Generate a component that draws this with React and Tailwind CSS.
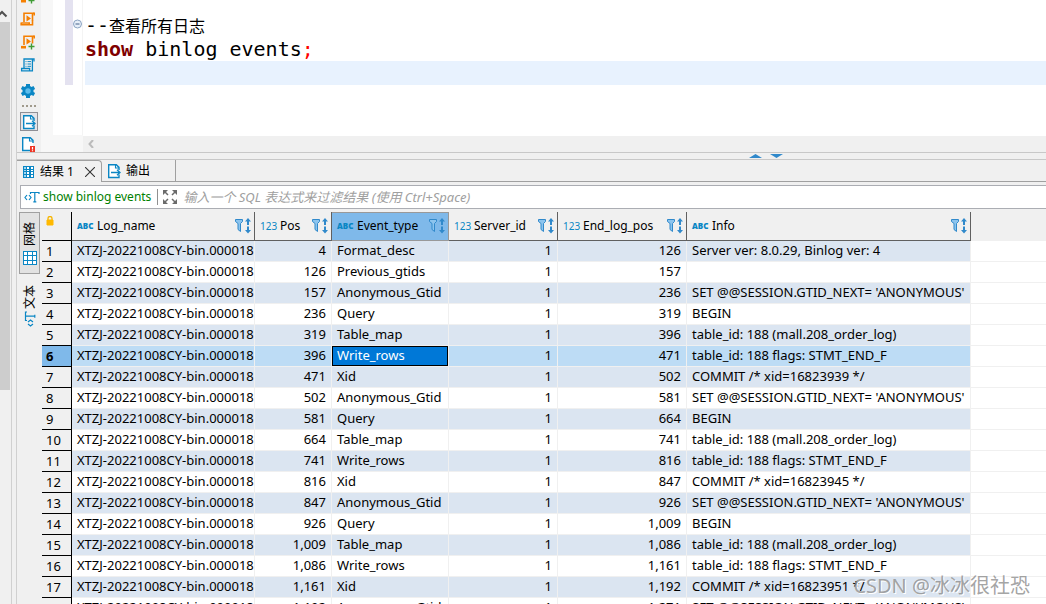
import React from 'react';

const LOG_NAME = 'XTZJ-20221008CY-bin.000018';

const columns = [
  { name: 'Log_name', type: 'ABC' },
  { name: 'Pos', type: '123' },
  { name: 'Event_type', type: 'ABC', active: true },
  { name: 'Server_id', type: '123' },
  { name: 'End_log_pos', type: '123' },
  { name: 'Info', type: 'ABC' },
];

const SET_GTID = "SET @@SESSION.GTID_NEXT= 'ANONYMOUS'";
const MAP_INFO = 'table_id: 188 (mall.208_order_log)';
const WRITE_INFO = 'table_id: 188 flags: STMT_END_F';

const rows = [
  ['4', 'Format_desc', '126', 'Server ver: 8.0.29, Binlog ver: 4'],
  ['126', 'Previous_gtids', '157', ''],
  ['157', 'Anonymous_Gtid', '236', SET_GTID],
  ['236', 'Query', '319', 'BEGIN'],
  ['319', 'Table_map', '396', MAP_INFO],
  ['396', 'Write_rows', '471', WRITE_INFO],
  ['471', 'Xid', '502', 'COMMIT /* xid=16823939 */'],
  ['502', 'Anonymous_Gtid', '581', SET_GTID],
  ['581', 'Query', '664', 'BEGIN'],
  ['664', 'Table_map', '741', MAP_INFO],
  ['741', 'Write_rows', '816', WRITE_INFO],
  ['816', 'Xid', '847', 'COMMIT /* xid=16823945 */'],
  ['847', 'Anonymous_Gtid', '926', SET_GTID],
  ['926', 'Query', '1,009', 'BEGIN'],
  ['1,009', 'Table_map', '1,086', MAP_INFO],
  ['1,086', 'Write_rows', '1,161', WRITE_INFO],
  ['1,161', 'Xid', '1,192', 'COMMIT /* xid=16823951 */'],
  ['1,192', 'Anonymous_Gtid', '1,271', SET_GTID],
];

const SELECTED = 5;

const ScriptIcon = ({ plus }) => (
  <svg width="16" height="16" viewBox="0 0 16 16" fill="none" stroke="#f57f00" strokeWidth="1.6">
    <path d="M4 11V2.2h10.2M12.5 2.2v7.3" />
    {plus ? <path d="M1 13.2h5" strokeWidth="2.6" /> : <path d="M1.2 12h8v1.8h3.3V9M1.2 11.4v2.4h8" />}
    <path d="M14.2 1.4v3" />
    <path d="M6.5 4.2v6.4L11 7.4z" fill="#f57f00" stroke="none" />
    {plus && <path d="M11.5 9.5v6M8.5 12.5h6" stroke="#3f9c35" strokeWidth="1.4" />}
  </svg>
);

const PlanIcon = () => (
  <svg width="16" height="16" viewBox="0 0 16 16" fill="none" stroke="#0a86c4" strokeWidth="1.3">
    <path d="M4 11V2h10v2.4M12.4 2v11.8H1.6V11.5h8v2.3" />
    <path d="M5.5 4.6h1M7.5 4.6H11M5.5 7h1M7.5 7H11M5.5 9.3h1M7.5 9.3H11" strokeWidth="1" />
  </svg>
);

const GearIcon = () => (
  <svg width="16" height="16" viewBox="0 0 16 16">
    <path
      fill="#0a86c4"
      d="M6 1h4v2l1.500.900 2-1 1.600 3L13.500 7v2l1.600 1.100-1.600 3-2-1L10 13v2H6v-2l-1.500-.900-2 1-1.600-3L2.500 9V7L.9 5.900l1.600-3 2 1L6 3z"
    />
    <circle cx="8" cy="8" r="2.700" fill="#5dbcec" />
  </svg>
);

const DocIcon = ({ error }) => (
  <svg width="16" height="16" viewBox="0 0 16 16" fill="none" stroke="#0a86c4" strokeWidth="1.400">
    <path d="M13 11.500v3H2.700V1.700h7.600L13 4.400V7" fill="#fff" />
    <path d="M9.500 1.500v3.500h3.500" strokeWidth="1.100" />
    {error ? (
      <>
        <path d="M10 10h5v6h-5z" fill="#ee3524" stroke="none" />
        <path d="M12.500 11v2.500M12.500 14.300v1" stroke="#fff" strokeWidth="1.200" />
      </>
    ) : (
      <path d="M5 9.500h8.500M11 6.800l3 2.700-3 2.700" strokeWidth="1.300" />
    )}
  </svg>
);

const GridIcon = () => (
  <svg width="14" height="14" viewBox="0 0 14 14" fill="#fff" stroke="#0a86c4" shapeRendering="crispEdges">
    <path d="M.5.5h13v13H.5z" />
    <path d="M.5 4.500h13M.5 9.500h13M4.500.5v13M9.500.5v13" />
  </svg>
);

const TableIcon = () => (
  <svg width="12" height="14" viewBox="0 0 12 14" shapeRendering="crispEdges">
    <path d="M0 1h11v12H0z" fill="#0a86c4" />
    <path d="M4 2h2v2H4zM8 2h2v2H8zM4 5h2v1H4zM8 5h2v1H8zM4 7h2v2H4zM8 7h2v2H8zM4 10h2v2H4zM8 10h2v2H8z" fill="#fff" />
    <path d="M1 2h2v2H1zM1 5h2v1H1zM1 7h2v2H1zM1 10h2v2H1z" fill="#9fd6f2" />
  </svg>
);

const SqlTextIcon = () => (
  <svg width="16" height="12" viewBox="0 0 16 12" fill="none" stroke="#0a86c4" strokeWidth="1.200">
    <path d="M3 4L1 6.500 3 9M5 4l2 2.500L5 9" />
    <path d="M6.500 3V1.500h8.500V3M10.800 1.500v9.300M9.300 10.800h3" />
  </svg>
);

const ExpandIcon = () => (
  <svg width="16" height="16" viewBox="0 0 16 16" fill="#6b6b6b" stroke="#6b6b6b" strokeWidth="1.500">
    <path d="M2 2l4 4M14 2l-4 4M2 14l4-4M14 14l-4-4" fill="none" />
    <path d="M1 1h5L1 6zM15 1h-5l5 5zM1 15h5l-5-5zM15 15h-5l5-5z" stroke="none" />
  </svg>
);

const FilterSortIcon = () => (
  <svg width="17" height="16" viewBox="0 0 17 16">
    <path d="M.5 1.500h7v2L5.500 5.500v8L3 11.500v-6L.5 3.500z" fill="#8cc4ee" stroke="#3089cb" />
    <path d="M13 0l3 3.500h-2V7h-2V3.500h-2zM13 15.500l3-3.500h-2V8.500h-2V12h-2z" fill="#3089cb" />
  </svg>
);

const LockIcon = () => (
  <svg width="8" height="10" viewBox="0 0 8 10">
    <path d="M2 5V2.500a2 2 0 0 1 4 0V5" fill="none" stroke="#f5b400" strokeWidth="1.300" />
    <path d="M1 4h6v5H1z" fill="#ffb900" stroke="#ffb900" />
  </svg>
);

const OuterScrollbar = () => (
  <div className="flex w-[17px] shrink-0 bg-[#f0f0f0]">
    <div className="flex w-[10px] flex-col">
      <svg width="8" height="22" viewBox="0 0 8 22" fill="none" stroke="#505050" strokeWidth="2">
        <path d="M-2.500 16.500L2 12l4.500 4.500" />
      </svg>
      <div className="h-[61%] bg-[#cdcdcd]" />
    </div>
    <div className="ml-px w-[6px] border-x border-[#d0d0d0]" />
  </div>
);

const Toolbar = () => (
  <div className="flex w-6 shrink-0 flex-col bg-[#f0f0f0] pl-[3px]">
    <button aria-label="New script" className="-mt-3 size-4"><ScriptIcon plus /></button>
    <button aria-label="Execute script" className="mt-[7px] size-4"><ScriptIcon /></button>
    <button aria-label="Execute in new tab" className="mt-[7px] size-4"><ScriptIcon plus /></button>
    <button aria-label="Explain plan" className="mt-[7px] size-4"><PlanIcon /></button>
    <button aria-label="Settings" className="mt-2.5 size-4"><GearIcon /></button>
    <div className="mt-1.5 ml-0.5 flex gap-0.5">
      {[0, 1, 2, 3].map((i) => (
        <span key={i} className="size-0.5 bg-[#a09a8c]" />
      ))}
    </div>
    <button aria-label="Show output" className="mt-[5px] flex h-5 w-[18px] items-center justify-center border border-[#8f8f95] bg-[#e4e4e8]">
      <DocIcon />
    </button>
    <button aria-label="Show log" className="mt-[5px] size-4"><DocIcon error /></button>
  </div>
);

const Editor = () => (
  <div className="flex h-[152px] shrink-0 overflow-hidden">
    <Toolbar />
    <div className="w-3 shrink-0 bg-[#f7f7f7]" />
    <div className="flex w-[30px] shrink-0 flex-col bg-[#f7f7f7]">
      <div className="flex h-[135px] border-r border-[#f4f4f4] bg-white">
        <div className="ml-3 h-[85px] w-2 bg-[#e4e2f0]" />
        <button aria-label="Fold" className="mt-[19px] h-[10px] w-[9px]">
          <svg width="9" height="10" viewBox="0 0 9 10" fill="#e6eef8" stroke="#8ba3c2">
            <circle cx="4.500" cy="5" r="4" />
            <path d="M2.500 5h4" stroke="#44618a" />
          </svg>
        </button>
      </div>
    </div>
    <div className="flex min-w-0 flex-1 flex-col">
      <div className="h-[136px] bg-white pt-[13px] pl-0.5 font-['DejaVu_Sans_Mono','Noto_Sans_CJK_SC',monospace] text-[20px] leading-6 whitespace-pre text-black">
        <div className="h-6">--<span className="text-[16px]">查看所有日志</span></div>
        <div className="h-6">
          <span className="font-bold text-[#800000]">show</span> binlog events<span className="text-[#ff0000]">;</span>
        </div>
        <div className="h-6 bg-[#e8f2fe]" />
      </div>
      <div className="flex flex-1 items-center bg-[#f0f0f0] pl-[5px]">
        <svg width="6" height="8" viewBox="0 0 6 8" fill="none" stroke="#bbb" strokeWidth="2">
          <path d="M5 0L1.500 4 5 8" />
        </svg>
      </div>
    </div>
  </div>
);

const Splitter = () => (
  <div className="flex h-2 shrink-0 items-center border-y border-[#c8c8c8] bg-[#f0f0f0]">
    <svg className="ml-[71%]" width="36" height="4" viewBox="0 0 36 4" fill="#3089cb">
      <path d="M1 4l6.500-4L14 4zM22 0h13l-6.500 4z" />
    </svg>
  </div>
);

const Tabs = () => (
  <div className="flex h-[22px] shrink-0">
    <div className="flex w-[85px] items-center rounded-tr border-t border-r border-[#a0a0a0] pl-1.5">
      <TableIcon />
      <button className="ml-[5px] whitespace-nowrap">结果 1</button>
      <button aria-label="Close" className="ml-auto pr-1.5">
        <svg width="10" height="10" viewBox="0 0 10 10" stroke="#333" strokeWidth="1.100">
          <path d="M0 0l10 10M10 0L0 10" />
        </svg>
      </button>
    </div>
    <button className="flex w-[74px] items-center border-r border-b border-[#a0a0a0] pl-1">
      <DocIcon />
      <span className="ml-1">输出</span>
    </button>
    <div className="flex-1 border-b border-[#a0a0a0]" />
  </div>
);

const FilterBar = () => (
  <div className="mt-[3px] ml-[3px] flex h-6 shrink-0 items-center border-y border-l border-[#abadb3] bg-white pl-[3px]">
    <SqlTextIcon />
    <label htmlFor="filter" className="ml-[3px] whitespace-nowrap text-[#008000]">show binlog events</label>
    <span className="ml-1.5 h-4 border-l border-[#909090]" />
    <button aria-label="Expand" className="ml-1"><ExpandIcon /></button>
    <input
      id="filter"
      className="ml-[5px] min-w-0 flex-1 text-[13px] italic outline-none placeholder:text-[#a0a0a0]"
      placeholder="输入一个 SQL 表达式来过滤结果 (使用 Ctrl+Space)"
    />
  </div>
);

const SideTabs = () => (
  <div className="flex w-[22px] shrink-0 flex-col pl-0.5">
    <button className="flex h-[62px] w-[21px] flex-col items-center justify-end gap-[5px] border border-[#a0a0a0] bg-[#e2e2e2] pb-2">
      <span className="rotate-180 [text-orientation:sideways] [writing-mode:vertical-rl]">网格</span>
      <GridIcon />
    </button>
    <button className="mt-[11px] flex w-[21px] flex-col items-center gap-1">
      <span className="rotate-180 [text-orientation:sideways] [writing-mode:vertical-rl]">文本</span>
      <span className="-rotate-90"><SqlTextIcon /></span>
    </button>
  </div>
);

const HeaderCell = ({ name, type, active }) => (
  <th
    className={
      active
        ? 'border-r border-b border-[#999] bg-[#7fb9ea] p-0 font-normal shadow-[inset_0_1px_0_#999]'
        : 'border-r border-b border-[#606060] bg-[#f0f0f0] p-0 font-normal'
    }
  >
    <div className="flex items-center pr-0.5 pl-[5px]">
      {type === 'ABC' ? (
        <span className="w-4 text-[8px] leading-none font-black text-[#0a86c4]">ABC</span>
      ) : (
        <span className="w-4 text-[10px] leading-none text-[#0a86c4]">123</span>
      )}
      <span className="ml-1 text-[12px]">{name}</span>
      <button aria-label={`Filter ${name}`} className="ml-auto"><FilterSortIcon /></button>
    </div>
  </th>
);

const Row = ({ row, index }) => {
  const [pos, event, end, info] = row;
  const selected = index === SELECTED;
  const bg = selected ? 'bg-[#bddcf5]' : index % 2 === 0 ? 'bg-[#dbe5f1]' : 'bg-white';
  const cell = `h-[21px] border-r border-b border-[#f0f0f0] px-[5px] pt-0 pb-0.5 whitespace-nowrap ${bg}`;

  return (
    <tr>
      <th
        className={`h-[21px] border-r border-b border-black py-0 pl-1 text-left ${
          selected ? 'bg-[#7fb9ea] font-bold' : 'bg-[#f0f0f0] font-normal'
        }`}
      >
        {index + 1}
      </th>
      <td className={cell}>{LOG_NAME}</td>
      <td className={`${cell} text-right`}>{pos}</td>
      {selected ? (
        <td className="h-[21px] border-r border-b border-[#f0f0f0] p-0">
          <div className="h-5 border border-black bg-[#0078d7] px-1 text-white">{event}</div>
        </td>
      ) : (
        <td className={cell}>{event}</td>
      )}
      <td className={`${cell} text-right`}>1</td>
      <td className={`${cell} text-right`}>{end}</td>
      <td className={cell}>{info}</td>
      <td className="border-b border-[#f0f0f0] bg-white p-0" />
    </tr>
  );
};

const ResultGrid = () => (
  <div className="min-w-0 flex-1 overflow-hidden pl-[3px]">
    <table className="w-full table-fixed border-separate border-spacing-0 text-[13px] leading-4">
      <colgroup>
        <col className="w-[30px]" />
        <col className="w-[183px]" />
        <col className="w-[77px]" />
        <col className="w-[117px]" />
        <col className="w-[109px]" />
        <col className="w-[129px]" />
        <col className="w-[284px]" />
        <col />
      </colgroup>
      <thead>
        <tr className="h-[29px]">
          <th className="border-r border-b border-black p-0 pt-1 pl-1 align-top"><LockIcon /></th>
          {columns.map((col) => (
            <HeaderCell key={col.name} {...col} />
          ))}
          <th className="p-0" />
        </tr>
      </thead>
      <tbody>
        {rows.map((row, i) => (
          <Row key={row[0]} row={row} index={i} />
        ))}
      </tbody>
    </table>
  </div>
);

const App = () => (
  <div className="relative flex h-screen overflow-hidden bg-[#f0f0f0] font-['Noto_Sans','Noto_Sans_CJK_SC',sans-serif] text-[12px] leading-4 text-black">
    <OuterScrollbar />
    <div className="flex min-w-0 flex-1 flex-col">
      <Editor />
      <Splitter />
      <Tabs />
      <FilterBar />
      <div className="mt-[3px] flex min-h-0 flex-1">
        <SideTabs />
        <ResultGrid />
      </div>
    </div>
    <div className="absolute right-4 bottom-1 text-[20px] leading-7 text-[#8c8c8c]/80 [text-shadow:1px_1px_0_#fff]">
      CSDN @冰冰很社恐
    </div>
  </div>
);

export default App;
